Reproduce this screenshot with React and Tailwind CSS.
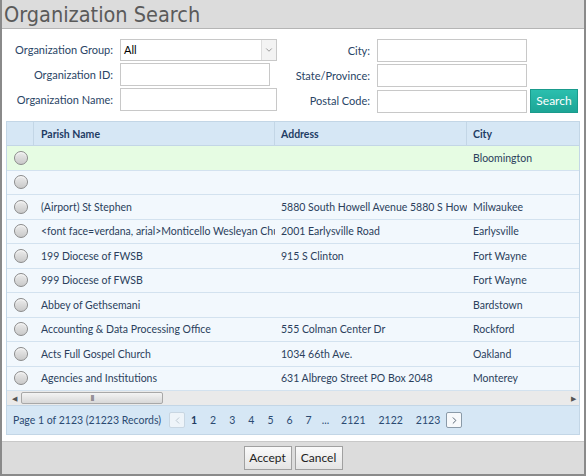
import { ChevronDown, ChevronLeft, ChevronRight } from 'lucide-react'

const rows = [
  { name: '', address: '', city: 'Bloomington', selected: true },
  { name: '', address: '', city: '' },
  { name: '(Airport) St Stephen', address: '5880 South Howell Avenue 5880 S Howell Ave', city: 'Milwaukee' },
  { name: '<font face=verdana, arial>Monticello Wesleyan Church</font>', address: '2001 Earlysville Road', city: 'Earlysville' },
  { name: '199 Diocese of FWSB', address: '915 S Clinton', city: 'Fort Wayne' },
  { name: '999 Diocese of FWSB', address: '', city: 'Fort Wayne' },
  { name: 'Abbey of Gethsemani', address: '', city: 'Bardstown' },
  { name: 'Accounting & Data Processing Office', address: '555 Colman Center Dr', city: 'Rockford' },
  { name: 'Acts Full Gospel Church', address: '1034 66th Ave.', city: 'Oakland' },
  { name: 'Agencies and Institutions', address: '631 Albrego Street PO Box 2048', city: 'Monterey' },
]

const pages = [
  { label: '2', ml: 'ml-[13px]' },
  { label: '3', ml: 'ml-[13px]' },
  { label: '4', ml: 'ml-[13px]' },
  { label: '5', ml: 'ml-[13px]' },
  { label: '6', ml: 'ml-[13px]' },
  { label: '7', ml: 'ml-[13px]' },
  { label: '...', ml: 'ml-[10px]' },
  { label: '2121', ml: 'ml-[12px]' },
  { label: '2122', ml: 'ml-[13px]' },
  { label: '2123', ml: 'ml-[13px]' },
]

const Field = ({ label, labelWidth = 'w-[114px]', width = 'w-[150px]' }) => (
  <div className="flex items-center">
    <label className={`${labelWidth} shrink-0 whitespace-nowrap pr-[7px] text-right`}>{label}</label>
    <input className={`h-[23px] ${width} shrink-0 border border-[#c8c8c8] bg-white px-1 outline-none`} />
  </div>
)

const Radio = () => (
  <span className="block h-[14px] w-[14px] rounded-full border border-[#8a8a8a] bg-gradient-to-b from-[#ececec] to-[#c9c9c9] shadow-[inset_0_1px_1px_rgba(255,255,255,0.8)]" />
)

export default function App() {
  return (
    <div
      className="flex h-[476px] w-[586px] flex-col border-x-2 border-b-2 border-[#8a8a8a] bg-white text-[11px] leading-[14px] text-[#2a4566]"
      style={{ fontFamily: 'Lato, "Liberation Sans", sans-serif' }}
    >
      <div className="h-[29px] shrink-0 border-b border-[#b5b5b5] bg-[#dcdcdc] pl-[2px]">
        <h1
          className="text-[21.5px] leading-[30px] text-[#5a5a5a]"
          style={{ fontFamily: '"DejaVu Sans Condensed", "DejaVu Sans", sans-serif' }}
        >
          Organization Search
        </h1>
      </div>

      <div className="flex-1 px-[4px] pt-[10px]">
        <div className="flex">
          <div className="flex flex-col gap-[2px]">
            <div className="flex items-center">
              <label className="w-[114px] shrink-0 whitespace-nowrap pr-[7px] text-right">Organization Group:</label>
              <div className="flex h-[22px] w-[157px] shrink-0 items-center border border-[#c8c8c8] bg-white">
                <span className="flex-1 pl-[3px] text-[11px] text-black">All</span>
                <span className="flex h-full w-[15px] items-center justify-center border-l border-[#dcdcdc] bg-[#f3f3f3]">
                  <ChevronDown size={10} strokeWidth={2} className="text-[#888]" />
                </span>
              </div>
            </div>
            <Field label="Organization ID:" />
            <Field label="Organization Name:" width="w-[157px]" />
          </div>
          <div className="flex flex-col gap-[2px]">
            <Field label="City:" labelWidth="w-[100px]" />
            <Field label="State/Province:" labelWidth="w-[100px]" />
            <div className="flex items-center">
              <Field label="Postal Code:" labelWidth="w-[100px]" />
              <button className="ml-[3px] h-[24px] w-[48px] shrink-0 border border-[#1a9b8c] bg-gradient-to-b from-[#2bbfae] to-[#1ca596] text-[12px] text-white">
                Search
              </button>
            </div>
          </div>
        </div>

        <div className="mt-[8px] overflow-hidden border border-[#c3d6e6] text-[10.5px] text-[#2b3f5c]">
          <div className="w-[800px]">
            <div className="flex h-[24px] items-center border-b border-[#c3d6e6] bg-[#d6e7f5] font-bold text-[#1e3c64]">
              <div className="h-full w-[27px] border-r border-[#c3d6e6]" />
              <div className="flex h-full w-[241px] items-center border-r border-[#c3d6e6] pl-[7px]">Parish Name</div>
              <div className="flex h-full w-[192px] items-center border-r border-[#c3d6e6] pl-[6px]">Address</div>
              <div className="flex h-full flex-1 items-center pl-[6px]">City</div>
            </div>
            {rows.map((r, i) => (
              <div
                key={i}
                className={`flex h-[24.5px] items-center border-b border-[#d3e2ef] ${r.selected ? 'bg-[#e6fce3]' : 'bg-[#f2f8fd]'}`}
              >
                <div className="flex w-[27px] justify-center">
                  <Radio />
                </div>
                <div className="w-[241px] overflow-hidden whitespace-nowrap pl-[7px]">{r.name}</div>
                <div className="w-[192px] overflow-hidden whitespace-nowrap pl-[6px]">{r.address}</div>
                <div className="flex-1 whitespace-nowrap pl-[6px]">{r.city}</div>
              </div>
            ))}
          </div>
          <div className="flex h-[14px] items-center bg-[#eaeaea]">
            <span className="w-[14px] text-center text-[7px] text-[#555]">◀</span>
            <div className="flex h-[12px] w-[142px] items-center justify-center rounded-[2px] border border-[#a8a8a8] bg-gradient-to-b from-[#f4f4f4] to-[#d8d8d8] text-[7px] tracking-[-1px] text-[#666]">
              III
            </div>
            <span className="flex-1" />
            <span className="w-[12px] text-center text-[7px] text-[#555]">▶</span>
          </div>
          <div className="flex h-[29px] items-center border-t border-[#c3d6e6] bg-[#d6e7f5] pl-[6px] text-[10.5px] text-[#2b4a72]">
            <span>Page 1 of 2123 (21223 Records)</span>
            <span className="ml-[8px] flex h-[16px] w-[16px] items-center justify-center rounded-[2px] border border-[#c8d6e2] bg-[#eef4f9]">
              <ChevronLeft size={11} className="text-[#b8c4ce]" />
            </span>
            <span className="ml-[6px] font-bold text-[#1e3c64]">1</span>
            {pages.map((p) => (
              <span key={p.label} className={p.ml}>
                {p.label}
              </span>
            ))}
            <span className="ml-[6px] flex h-[16px] w-[16px] items-center justify-center rounded-[2px] border border-[#8a9aa8] bg-[#f7f9fb]">
              <ChevronRight size={11} className="text-[#4b5b6a]" />
            </span>
          </div>
        </div>
      </div>

      <div className="flex h-[33px] shrink-0 items-center justify-center gap-[3px] border-t border-[#c8c8c8] bg-[#dcdcdc]">
        <button className="h-[24px] w-[48px] border border-[#a0a0a0] bg-gradient-to-b from-[#fafafa] to-[#e4e4e4] text-[12px] text-[#222]">
          Accept
        </button>
        <button className="h-[24px] w-[48px] border border-[#a0a0a0] bg-gradient-to-b from-[#fafafa] to-[#e4e4e4] text-[12px] text-[#222]">
          Cancel
        </button>
      </div>
    </div>
  )
}
